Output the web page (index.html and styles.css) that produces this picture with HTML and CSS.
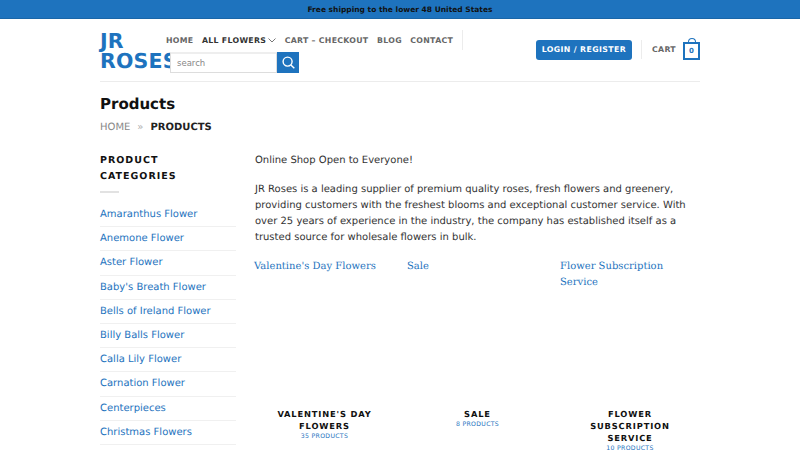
FILE: index.html
```html
<!DOCTYPE html>
<html lang="en">
<head>
  <meta charset="UTF-8" />
  <title>Products - JR Roses</title>
  <link rel="stylesheet" href="styles.css">
</head>
<body>
  <div class="topbar">Free shipping to the lower 48 United States</div>

  <header class="header">
    <a class="logo" href="#">JR ROSES</a>
    <div class="header-mid">
      <nav class="nav">
        <a href="#">Home</a>
        <a href="#" class="active">All Flowers<svg class="caret" width="8" height="5" viewBox="0 0 8 5"><path d="M0.5 0.5 L4 4 L7.5 0.5" fill="none" stroke="#777" stroke-width="1"/></svg></a>
        <a href="#">Cart – Checkout</a>
        <a href="#">Blog</a>
        <a href="#">Contact</a>
        <span class="nav-divider"></span>
      </nav>
      <form class="search">
        <input type="text" placeholder="search">
        <button type="button" aria-label="Search">
          <svg width="13" height="13" viewBox="0 0 13 13"><circle cx="5.6" cy="5.6" r="4.5" fill="none" stroke="white" stroke-width="1.4"/><path d="M8.9 8.9 L12.3 12.3" stroke="white" stroke-width="1.4"/></svg>
        </button>
      </form>
    </div>
    <div class="header-right">
      <a class="btn-login" href="#">Login / Register</a>
      <span class="right-divider"></span>
      <a class="cart" href="#">Cart
        <span class="cart-bag">0</span>
      </a>
    </div>
  </header>

  <div class="page-title">
    <h1>Products</h1>
    <div class="crumbs"><a href="#">Home</a><span class="sep">»</span><strong>Products</strong></div>
  </div>

  <main class="main">
    <aside class="sidebar">
      <h3>Product Categories</h3>
      <div class="small-line"></div>
      <ul>
        <li><a href="#">Amaranthus Flower</a></li>
        <li><a href="#">Anemone Flower</a></li>
        <li><a href="#">Aster Flower</a></li>
        <li><a href="#">Baby's Breath Flower</a></li>
        <li><a href="#">Bells of Ireland Flower</a></li>
        <li><a href="#">Billy Balls Flower</a></li>
        <li><a href="#">Calla Lily Flower</a></li>
        <li><a href="#">Carnation Flower</a></li>
        <li><a href="#">Centerpieces</a></li>
        <li><a href="#">Christmas Flowers</a></li>
      </ul>
    </aside>

    <section class="content">
      <p>Online Shop Open to Everyone!</p>
      <p>JR Roses is a leading supplier of premium quality roses, fresh flowers and greenery, providing customers with the freshest blooms and exceptional customer service. With over 25 years of experience in the industry, the company has established itself as a trusted source for wholesale flowers in bulk.</p>

      <div class="cats">
        <div class="cat">
          <a class="cat-img" href="#">Valentine's Day Flowers</a>
          <h5>Valentine's Day Flowers</h5>
          <span class="count">35 Products</span>
        </div>
        <div class="cat">
          <a class="cat-img" href="#">Sale</a>
          <h5>Sale</h5>
          <span class="count">8 Products</span>
        </div>
        <div class="cat">
          <a class="cat-img" href="#">Flower Subscription Service</a>
          <h5>Flower Subscription Service</h5>
          <span class="count">10 Products</span>
        </div>
      </div>
    </section>
  </main>
</body>
</html>
```

FILE: styles.css
```css
html, body {
  height: 450px;
  overflow: hidden;
}
body {
  margin: 0;
  font-family: 'DejaVu Sans', sans-serif;
  font-size: 10px;
  color: #333;
  background: #fff;
  text-rendering: geometricPrecision;
}
a {
  text-decoration: none;
  color: #1e73be;
}
.topbar {
  height: 18px;
  line-height: 19px;
  background: #1e73be;
  border-bottom: 1px solid #1a66a8;
  color: #111;
  font-size: 7.5px;
  font-weight: bold;
  text-align: center;
}
.header {
  width: 600px;
  height: 62px;
  margin: 0 auto;
  display: flex;
  border-bottom: 1px solid #ececec;
}
.logo {
  width: 60px;
  margin-top: 12px;
  font-size: 20.5px;
  line-height: 20px;
  font-weight: bold;
  letter-spacing: 0.2px;
  color: #1e73be;
  flex: none;
}
.header-mid {
  width: 310px;
  padding-left: 6px;
  flex: none;
}
.nav {
  display: flex;
  align-items: center;
  gap: 8.5px;
  height: 22px;
  margin-top: 10px;
}
.nav a {
  font-size: 7.8px;
  font-weight: bold;
  letter-spacing: 0.3px;
  text-transform: uppercase;
  color: #666;
  white-space: nowrap;
}
.nav a.active {
  color: #333;
}
.caret {
  margin-left: 2px;
  vertical-align: 0;
}
.nav-divider {
  width: 1px;
  height: 20px;
  background: #ececec;
}
.search {
  display: flex;
  margin: 1px 0 0 4px;
}
.search input {
  width: 107px;
  height: 21px;
  box-sizing: border-box;
  padding: 0 6px;
  border: 1px solid #ddd;
  border-top: 2px solid #eee;
  font-family: inherit;
  font-size: 8.5px;
  outline: none;
}
.search input::placeholder {
  color: #888;
}
.search button {
  width: 22px;
  height: 21px;
  padding: 0;
  border: none;
  background: #1e73be;
  display: flex;
  align-items: center;
  justify-content: center;
}
.header-right {
  flex: 1;
  display: flex;
  align-items: center;
  justify-content: flex-end;
  padding-bottom: 1px;
}
.btn-login {
  height: 20px;
  line-height: 20px;
  padding: 0 6px;
  background: #1e73be;
  color: #fff;
  border-radius: 3px;
  font-size: 7.8px;
  font-weight: bold;
  letter-spacing: 0.38px;
  text-transform: uppercase;
}
.right-divider {
  width: 1px;
  height: 19px;
  margin: 0 10px 0 9px;
  background: #ececec;
}
.cart {
  display: flex;
  align-items: center;
  gap: 7px;
  font-size: 7.8px;
  font-weight: bold;
  letter-spacing: 0.3px;
  text-transform: uppercase;
  color: #666;
}
.cart-bag {
  position: relative;
  width: 13px;
  height: 14px;
  margin-top: 2px;
  border: 2px solid #1e73be;
  color: #1e73be;
  font-size: 7px;
  line-height: 14px;
  text-align: center;
}
.cart-bag::before {
  content: "";
  position: absolute;
  top: -6px;
  left: 2.5px;
  width: 6px;
  height: 4px;
  border: 1px solid #1e73be;
  border-bottom: none;
  border-radius: 4px 4px 0 0;
}
.page-title {
  width: 600px;
  margin: 0 auto;
  padding-top: 12px;
}
h1 {
  margin: 0;
  font-size: 15px;
  line-height: 20px;
  color: #111;
}
.crumbs {
  margin-top: 6px;
  font-size: 10px;
  line-height: 16px;
  text-transform: uppercase;
  color: #888;
}
.crumbs a {
  color: #888;
}
.crumbs .sep {
  margin: 0 7px;
  color: #aaa;
}
.crumbs strong {
  color: #222;
}
.main {
  width: 600px;
  margin: 17px auto 0;
  display: flex;
  gap: 19px;
}
.sidebar {
  width: 136px;
  flex: none;
}
.sidebar h3 {
  margin: 0;
  font-size: 9.5px;
  line-height: 16px;
  letter-spacing: 1px;
  text-transform: uppercase;
  color: #111;
}
.small-line {
  width: 19px;
  height: 2px;
  background: #e2e2e2;
  margin: 6px 0 10px;
}
.sidebar ul {
  margin: 0;
  padding: 0;
  list-style: none;
}
.sidebar li {
  height: 23.2px;
  line-height: 23px;
  border-bottom: 1px solid #f0f0f0;
  font-size: 10px;
}
.content {
  flex: 1;
  font-size: 10px;
  line-height: 16px;
}
.content p {
  margin: 0 0 13px;
  color: #333;
}
.cats {
  display: flex;
  margin-left: -1px;
}
.cat {
  width: 153px;
  flex: none;
  padding-right: 12px;
  box-sizing: border-box;
  text-align: center;
}
.cat:last-child {
  width: 140px;
  padding-right: 0;
}
.cat-img {
  display: block;
  height: 149px;
  font-family: 'DejaVu Serif', serif;
  font-size: 10px;
  line-height: 16px;
  text-align: left;
}
.cat h5 {
  margin: 0;
  padding: 0 12px;
  font-size: 8.3px;
  line-height: 12px;
  letter-spacing: 0.85px;
  text-transform: uppercase;
  color: #111;
}
.count {
  display: block;
  font-size: 6.2px;
  line-height: 10px;
  letter-spacing: 0.3px;
  text-transform: uppercase;
  color: #1e73be;
}
```
